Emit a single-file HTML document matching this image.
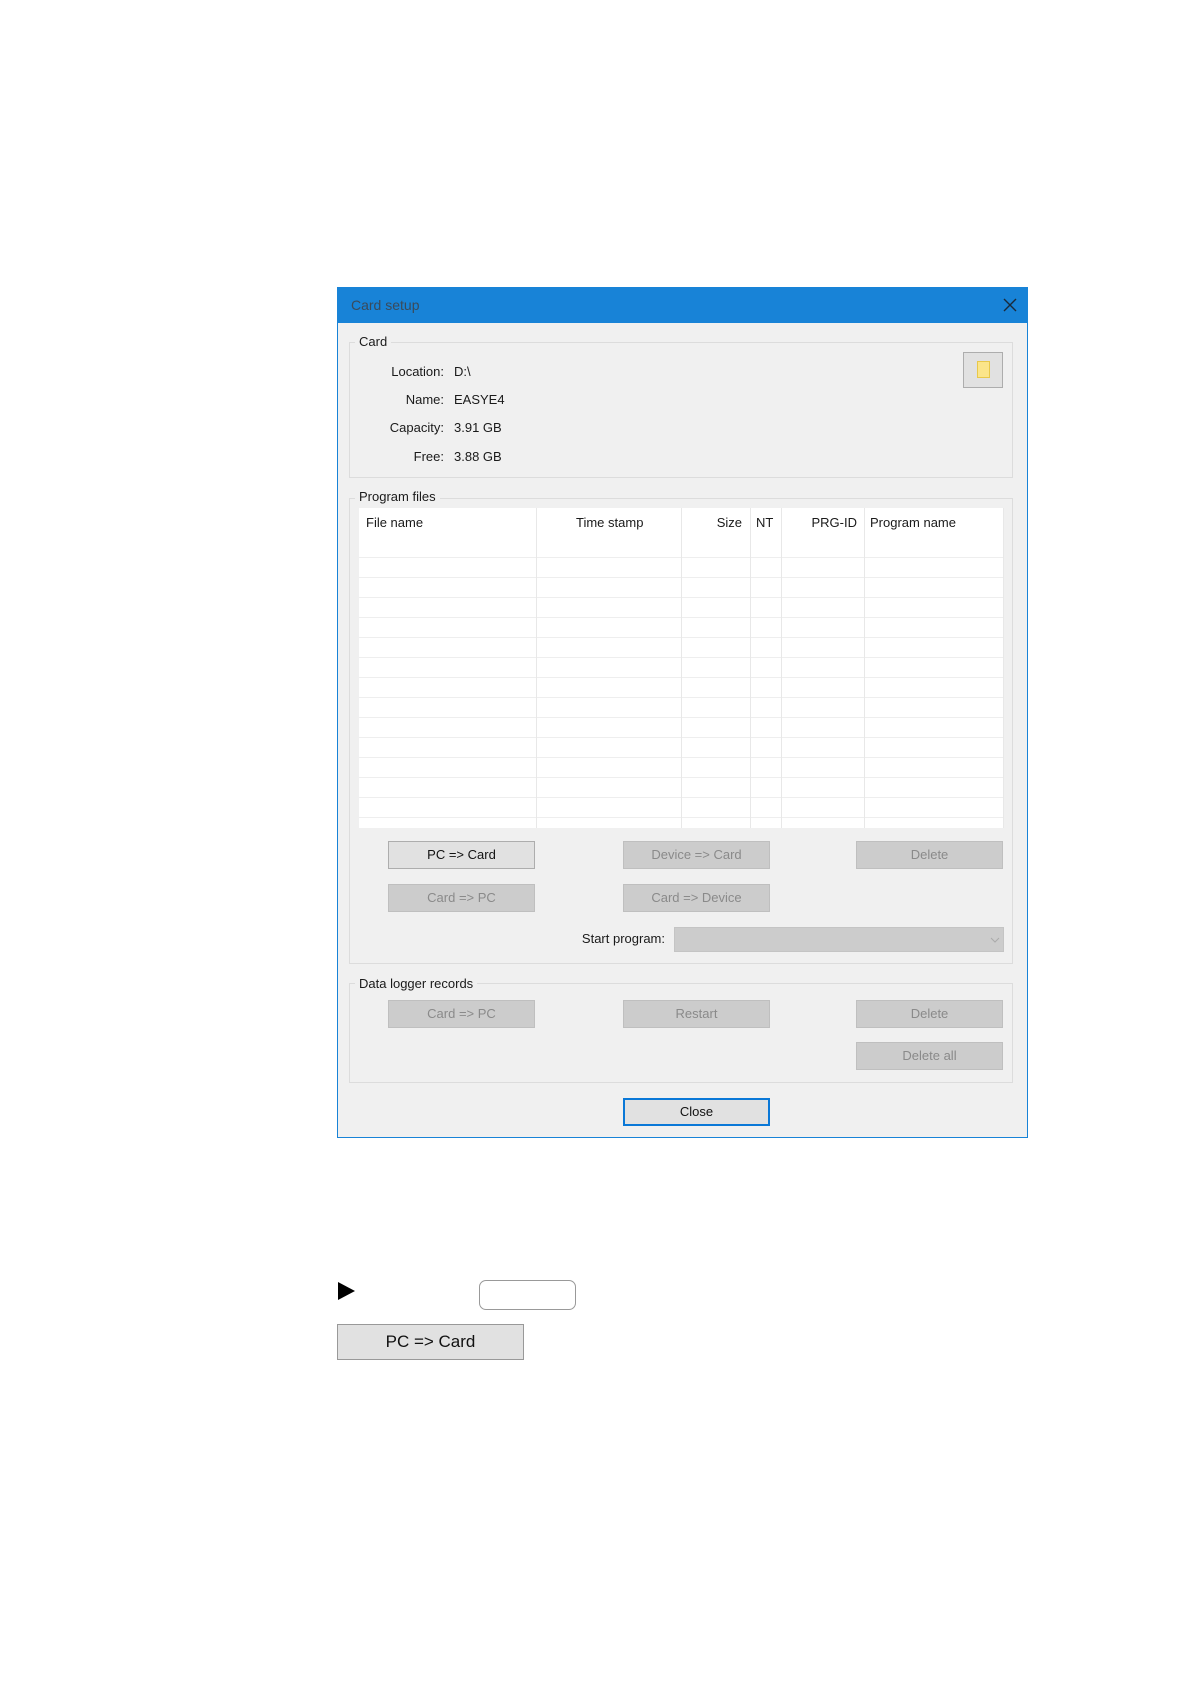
<!DOCTYPE html>
<html><head><meta charset="utf-8"><style>
body{margin:0;width:1191px;height:1684px;background:#fff;position:relative;font-family:"Liberation Sans",sans-serif;overflow:hidden}
.a{position:absolute}
.t{position:absolute;font-size:13px;color:#1a1a1a;white-space:nowrap;line-height:16px}
.btn{position:absolute;box-sizing:border-box;border:1px solid #adadad;background:#e1e1e1;font-size:13px;text-align:center;color:#111}
.dis{background:#cccccc;border-color:#bfbfbf;color:#8a8a8a}
.grp{position:absolute;box-sizing:border-box;border:1px solid #dcdcdc}
.lbl{position:absolute;background:#f0f0f0;padding:0 4px;font-size:13px;color:#1a1a1a;line-height:16px}
.hl{position:absolute;left:0;right:0;height:1px;background:#eeeeee}
.vl{position:absolute;top:0;bottom:0;width:1px;background:#e8e8e8}
</style></head><body>
<div class="a" style="left:337px;top:287px;width:691px;height:851px;box-sizing:border-box;border:1px solid #1883d7;background:#f0f0f0"></div>
<div class="a" style="left:337px;top:287px;width:691px;height:36px;background:#1883d7"></div>
<div class="t" style="left:351px;top:297px;color:#3a4a5a;font-size:14px">Card setup</div>
<svg class="a" style="left:1003px;top:298px" width="14" height="14"><path d="M1 1L13 13M13 1L1 13" stroke="#1a2a3a" stroke-width="1.4"/></svg>

<div class="grp" style="left:349px;top:342px;width:664px;height:136px"></div>
<div class="lbl" style="left:355px;top:334px">Card</div>
<div class="t" style="left:340px;width:104px;text-align:right;top:364px">Location:</div><div class="t" style="left:454px;top:364px">D:\</div>
<div class="t" style="left:340px;width:104px;text-align:right;top:392px">Name:</div><div class="t" style="left:454px;top:392px">EASYE4</div>
<div class="t" style="left:340px;width:104px;text-align:right;top:420px">Capacity:</div><div class="t" style="left:454px;top:420px">3.91 GB</div>
<div class="t" style="left:340px;width:104px;text-align:right;top:449px">Free:</div><div class="t" style="left:454px;top:449px">3.88 GB</div>
<div class="btn" style="left:963px;top:352px;width:40px;height:36px"></div>
<div class="a" style="left:977px;top:361px;width:13px;height:17px;background:#fbe58a;border:1px solid #e8c84a;box-sizing:border-box"></div>

<div class="grp" style="left:349px;top:498px;width:664px;height:466px"></div>
<div class="lbl" style="left:355px;top:489px">Program files</div>
<div class="a" style="left:359px;top:508px;width:645px;height:320px;background:#fff">
 <div class="hl" style="top:49px"></div><div class="hl" style="top:69px"></div><div class="hl" style="top:89px"></div><div class="hl" style="top:109px"></div><div class="hl" style="top:129px"></div><div class="hl" style="top:149px"></div><div class="hl" style="top:169px"></div><div class="hl" style="top:189px"></div><div class="hl" style="top:209px"></div><div class="hl" style="top:229px"></div><div class="hl" style="top:249px"></div><div class="hl" style="top:269px"></div><div class="hl" style="top:289px"></div><div class="hl" style="top:309px"></div>
 <div class="vl" style="left:177px"></div><div class="vl" style="left:322px"></div><div class="vl" style="left:391px"></div><div class="vl" style="left:422px"></div><div class="vl" style="left:505px"></div><div class="vl" style="left:644px"></div>
 <div class="t" style="left:7px;top:7px">File name</div>
 <div class="t" style="left:217px;top:7px">Time stamp</div>
 <div class="t" style="left:330px;width:53px;text-align:right;top:7px">Size</div>
 <div class="t" style="left:397px;top:7px">NT</div>
 <div class="t" style="left:430px;width:68px;text-align:right;top:7px">PRG-ID</div>
 <div class="t" style="left:511px;top:7px">Program name</div>
</div>
<div class="btn" style="left:388px;top:841px;width:147px;height:28px;line-height:26px">PC =&gt; Card</div>
<div class="btn dis" style="left:623px;top:841px;width:147px;height:28px;line-height:26px">Device =&gt; Card</div>
<div class="btn dis" style="left:856px;top:841px;width:147px;height:28px;line-height:26px">Delete</div>
<div class="btn dis" style="left:388px;top:884px;width:147px;height:28px;line-height:26px">Card =&gt; PC</div>
<div class="btn dis" style="left:623px;top:884px;width:147px;height:28px;line-height:26px">Card =&gt; Device</div>
<div class="t" style="left:560px;width:105px;text-align:right;top:931px">Start program:</div>
<div class="a" style="left:674px;top:927px;width:330px;height:25px;background:#cccccc;border:1px solid #c4c4c4;box-sizing:border-box"></div>
<svg class="a" style="left:990px;top:936px" width="10" height="8"><path d="M1 2L5 6L9 2" stroke="#aaa" fill="none"/></svg>

<div class="grp" style="left:349px;top:983px;width:664px;height:100px"></div>
<div class="lbl" style="left:355px;top:976px">Data logger records</div>
<div class="btn dis" style="left:388px;top:1000px;width:147px;height:28px;line-height:26px">Card =&gt; PC</div>
<div class="btn dis" style="left:623px;top:1000px;width:147px;height:28px;line-height:26px">Restart</div>
<div class="btn dis" style="left:856px;top:1000px;width:147px;height:28px;line-height:26px">Delete</div>
<div class="btn dis" style="left:856px;top:1042px;width:147px;height:28px;line-height:26px">Delete all</div>
<div class="btn" style="left:623px;top:1098px;width:147px;height:28px;line-height:24px;border:2px solid #0a78d7">Close</div>

<svg class="a" style="left:338px;top:1282px" width="18" height="18"><path d="M0 0L17 9L0 18Z" fill="#000"/></svg>
<div class="a" style="left:479px;top:1280px;width:97px;height:30px;border:1px solid #999;border-radius:7px;box-sizing:border-box"></div>
<div class="btn" style="left:337px;top:1324px;width:187px;height:36px;line-height:34px;font-size:17px;border-color:#999">PC =&gt; Card</div>
</body></html>
